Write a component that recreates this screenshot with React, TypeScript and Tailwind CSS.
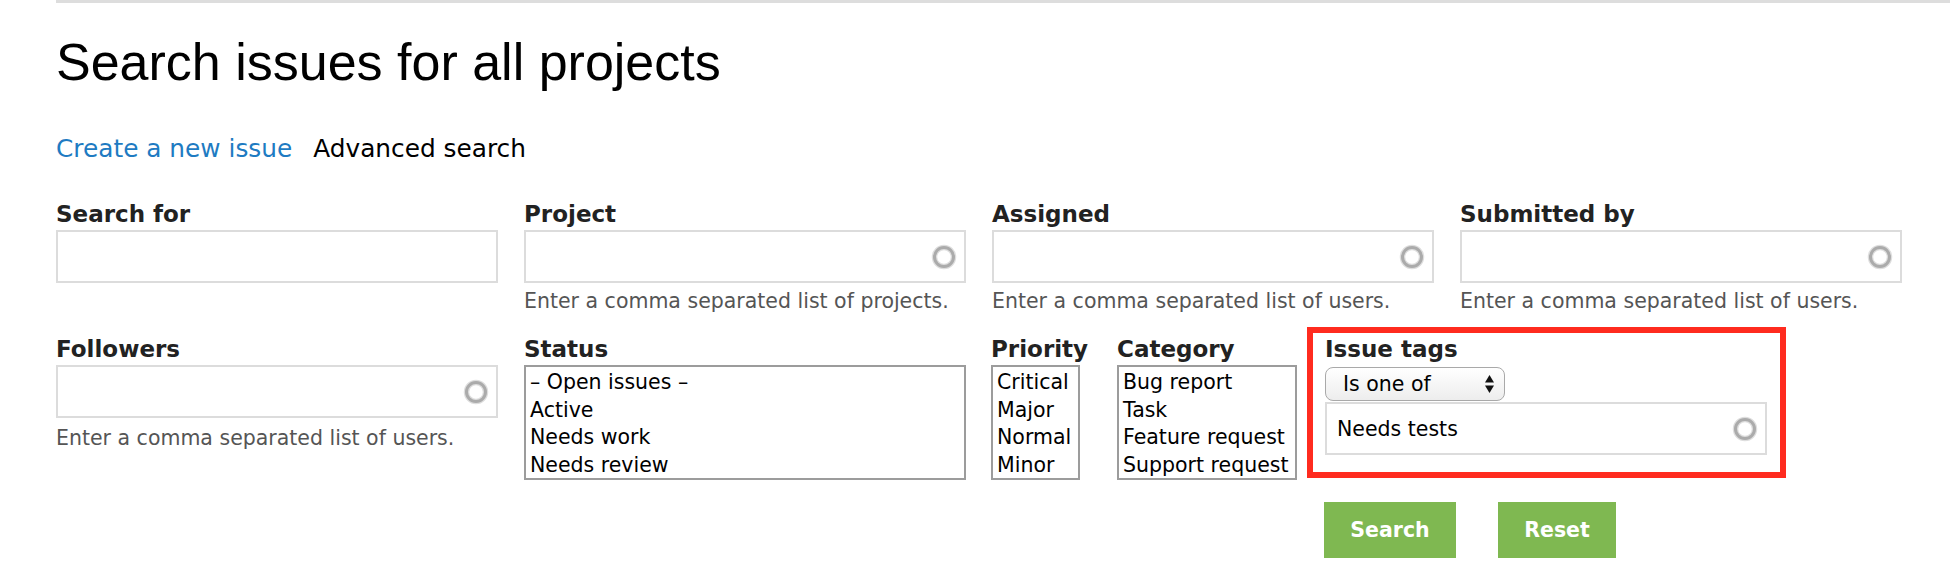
import React from 'react'

const sans = "font-['DejaVu_Sans','Liberation_Sans',sans-serif]"

function Throbber() {
  return (
    <svg width="28" height="28" viewBox="0 0 28 28" className="absolute right-[6px] top-1/2 -translate-y-1/2">
      <circle cx="14" cy="14" r="9.5" fill="none" stroke="#dedede" strokeWidth="5.5" />
      <circle cx="14" cy="14" r="9.5" fill="none" stroke="#ababab" strokeWidth="3" />
    </svg>
  )
}

function TextInput({ throbber = true, value }: { throbber?: boolean; value?: string }) {
  return (
    <div className="relative h-[53px] w-[442px] border-2 border-[#dcdcdc] bg-white">
      {value && (
        <span className="absolute left-[10px] top-1/2 -translate-y-1/2 text-[20.5px] leading-[28px] text-black">
          {value}
        </span>
      )}
      {throbber && <Throbber />}
    </div>
  )
}

function Label({ children, className = '' }: { children: React.ReactNode; className?: string }) {
  return <div className={`text-[23px] leading-[28px] font-bold text-[#222] whitespace-nowrap ${className}`}>{children}</div>
}

function Help({ children, className = 'mt-[4px]' }: { children: React.ReactNode; className?: string }) {
  return <div className={`text-[20.5px] leading-[28px] text-[#555] whitespace-nowrap ${className}`}>{children}</div>
}

function ListBox({ items, width }: { items: string[]; width: string }) {
  return (
    <div className={`h-[115px] overflow-hidden border-2 border-[#9c9c9c] bg-white px-[4px] pt-[2px] ${width}`}>
      {items.map((item) => (
        <div key={item} className="text-[20.5px] leading-[27.7px] text-black whitespace-nowrap">
          {item}
        </div>
      ))}
    </div>
  )
}

export default function App() {
  return (
    <div className={`w-[1950px] h-[570px] overflow-hidden bg-white ${sans}`}>
      <div className="ml-[56px] h-[3px] bg-[#dddddd]" />
      <div className="pl-[56px]">
        <h1 className="mt-[33px] text-[52px] leading-[52px] text-black font-['Liberation_Sans',Arial,sans-serif]">
          Search issues for all projects
        </h1>

        <div className="mt-[45px] flex gap-[21px] text-[24.8px] leading-[32px]">
          <a className="text-[#1e7bc2]">Create a new issue</a>
          <span className="text-black">Advanced search</span>
        </div>

        {/* Row 1 */}
        <div className="mt-[35px] flex items-start gap-[26px]">
          <div>
            <Label className="mb-[2px]">Search for</Label>
            <TextInput throbber={false} />
          </div>
          <div>
            <Label className="mb-[2px]">Project</Label>
            <TextInput />
            <Help>Enter a comma separated list of projects.</Help>
          </div>
          <div>
            <Label className="mb-[2px]">Assigned</Label>
            <TextInput />
            <Help>Enter a comma separated list of users.</Help>
          </div>
          <div>
            <Label className="mb-[2px]">Submitted by</Label>
            <TextInput />
            <Help>Enter a comma separated list of users.</Help>
          </div>
        </div>

        {/* Row 2 */}
        <div className="mt-[12px] flex items-start">
          <div className="pt-[8px] w-[442px]">
            <Label className="mb-[2px]">Followers</Label>
            <TextInput />
            <Help className="mt-[6px]">Enter a comma separated list of users.</Help>
          </div>
          <div className="pt-[8px] ml-[26px] w-[442px]">
            <Label className="mb-[2px]">Status</Label>
            <ListBox width="w-[442px]" items={['– Open issues –', 'Active', 'Needs work', 'Needs review']} />
          </div>
          <div className="pt-[8px] ml-[25px] w-[126px]">
            <Label className="mb-[2px]">Priority</Label>
            <ListBox width="w-[89px]" items={['Critical', 'Major', 'Normal', 'Minor']} />
          </div>
          <div className="pt-[8px] w-[180px]">
            <Label className="mb-[2px]">Category</Label>
            <ListBox width="w-[180px]" items={['Bug report', 'Task', 'Feature request', 'Support request']} />
          </div>
          <div className="ml-[10px] flex flex-col">
            <div className="w-[479px] border-[6px] border-[#ff2b1f] pt-[2px] pl-[12px] pr-[13px] pb-[17px]">
              <Label className="mb-[4px]">Issue tags</Label>
              <div className="relative mb-[1px] h-[34px] w-[180px] rounded-[8px] border-[1.5px] border-[#a9a9a9] bg-gradient-to-b from-white to-[#ededed]">
                <span className="absolute left-[17px] top-1/2 -translate-y-1/2 text-[20.5px] leading-[28px] text-black">Is one of</span>
                <svg width="11" height="20" viewBox="0 0 11 20" className="absolute right-[9px] top-1/2 -translate-y-1/2">
                  <path d="M1 8.5 L5.5 1 L10 8.5 Z" fill="#111" />
                  <path d="M1 11.5 L10 11.5 L5.5 19 Z" fill="#111" />
                </svg>
              </div>
              <TextInput value="Needs tests" />
            </div>
            <div className="mt-[24px] ml-[17px] flex gap-[42px]">
              <button className="h-[56px] w-[132px] bg-[#7fb851] text-[20.5px] font-bold text-white">Search</button>
              <button className="h-[56px] w-[118px] bg-[#7fb851] text-[20.5px] font-bold text-white">Reset</button>
            </div>
          </div>
        </div>
      </div>
    </div>
  )
}
